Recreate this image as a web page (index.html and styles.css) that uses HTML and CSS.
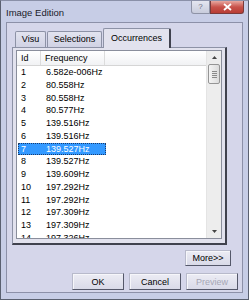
FILE: index.html
```html
<!DOCTYPE html>
<html lang="en">
<head>
    <meta charset="UTF-8">
    <title>Image Edition</title>
    <link rel="stylesheet" href="styles.css">
</head>
<body>
    <div class="ventana">
        <div class="titulo">
            <span class="titulo-texto">Image Edition</span>
            <div class="titulo-botones">
                <span class="btn-ayuda">?</span>
                <span class="btn-cerrar">
                    <svg width="9" height="8" viewBox="0 0 9 8"><path d="M1 1 L8 7 M8 1 L1 7" stroke="#fff" stroke-width="1.8"/></svg>
                </span>
            </div>
        </div>
        <div class="cliente">
            <div class="pestanas">
                <div class="pestana p-visu">Visu</div>
                <div class="pestana p-sel">Selections</div>
                <div class="pestana p-occ activa">Occurrences</div>
            </div>
            <div class="panel">
                <div class="lista">
                    <div class="lista-cuerpo">
                        <div class="cabecera">
                            <div class="col-id">Id</div>
                            <div class="col-freq">Frequency</div>
                            <div class="col-resto"></div>
                        </div>
                        <div class="fila"><div class="col-id">1</div><div class="col-freq">6.582e-006Hz</div></div>
                        <div class="fila"><div class="col-id">2</div><div class="col-freq">80.558Hz</div></div>
                        <div class="fila"><div class="col-id">3</div><div class="col-freq">80.558Hz</div></div>
                        <div class="fila"><div class="col-id">4</div><div class="col-freq">80.577Hz</div></div>
                        <div class="fila"><div class="col-id">5</div><div class="col-freq">139.516Hz</div></div>
                        <div class="fila"><div class="col-id">6</div><div class="col-freq">139.516Hz</div></div>
                        <div class="fila seleccionada"><div class="col-id">7</div><div class="col-freq">139.527Hz</div></div>
                        <div class="fila"><div class="col-id">8</div><div class="col-freq">139.527Hz</div></div>
                        <div class="fila"><div class="col-id">9</div><div class="col-freq">139.609Hz</div></div>
                        <div class="fila"><div class="col-id">10</div><div class="col-freq">197.292Hz</div></div>
                        <div class="fila"><div class="col-id">11</div><div class="col-freq">197.292Hz</div></div>
                        <div class="fila"><div class="col-id">12</div><div class="col-freq">197.309Hz</div></div>
                        <div class="fila"><div class="col-id">13</div><div class="col-freq">197.309Hz</div></div>
                        <div class="fila"><div class="col-id">14</div><div class="col-freq">197.326Hz</div></div>
                    </div>
                    <div class="scroll">
                        <div class="flecha">
                            <svg width="5" height="3" viewBox="0 0 5 3"><path d="M0 3 L2.5 0 L5 3 Z" fill="#444"/></svg>
                        </div>
                        <div class="pulgar"><span></span><span></span><span></span><span></span></div>
                        <div class="pista"></div>
                        <div class="flecha">
                            <svg width="5" height="3" viewBox="0 0 5 3"><path d="M0 0 L5 0 L2.5 3 Z" fill="#444"/></svg>
                        </div>
                    </div>
                </div>
            </div>
            <div class="fila-mas">
                <button class="boton boton-mas">More&gt;&gt;</button>
            </div>
            <div class="fila-botones">
                <button class="boton">OK</button>
                <button class="boton">Cancel</button>
                <button class="boton deshabilitado">Preview</button>
            </div>
        </div>
    </div>
</body>
</html>
```

FILE: styles.css
```css
body {
    margin: 0;
    padding: 0;
    font-family: "Liberation Sans", Arial, sans-serif;
    font-size: 9px;
    color: #000;
    background-color: #fff;
}

.ventana {
    width: 249px;
    height: 300px;
    box-sizing: border-box;
    border: 1px solid #5a6070;
    border-top-color: #8a90a8;
    background-color: #c7cde6;
    display: flex;
    flex-direction: column;
}

.titulo {
    height: 21px;
    flex-shrink: 0;
    display: flex;
    align-items: flex-start;
    justify-content: space-between;
    padding-left: 5px;
}

.titulo-texto {
    margin-top: 6px;
    font-size: 9.5px;
    color: #1a1a2a;
}

.titulo-botones {
    display: flex;
    margin-right: 4px;
}

.btn-ayuda {
    width: 19px;
    height: 13px;
    box-sizing: border-box;
    border: 1px solid #8e93a6;
    border-top: none;
    border-radius: 0 0 0 3px;
    background: linear-gradient(#e4e6f0, #c8ccdc);
    color: #6a6e80;
    font-size: 8px;
    text-align: center;
    line-height: 12px;
}

.btn-cerrar {
    width: 34px;
    height: 13px;
    box-sizing: border-box;
    border: 1px solid #7a3a3a;
    border-top: none;
    border-radius: 0 0 3px 0;
    background: linear-gradient(#e8a8a0, #c8524a 50%, #b83c34);
    display: flex;
    align-items: center;
    justify-content: center;
}

.cliente {
    flex: 1;
    margin: 0 5px 6px 5px;
    border: 1px solid #8c90a8;
    background-color: #d5d6ea;
    display: flex;
    flex-direction: column;
}

.pestanas {
    display: flex;
    align-items: flex-end;
    height: 24px;
    flex-shrink: 0;
    padding-left: 8px;
}

.pestana {
    height: 16px;
    box-sizing: border-box;
    text-align: center;
    line-height: 15px;
    border: 1px solid #8d92a6;
    border-bottom: none;
    border-radius: 2px 2px 0 0;
    background: linear-gradient(#e2e3ef, #d0d2e4);
    margin-right: 1px;
}

.p-visu {
    width: 31px;
}

.p-sel {
    width: 55px;
}

.p-occ {
    width: 68px;
}

.pestana.activa {
    height: 20px;
    line-height: 18px;
    background: #e2e2ee;
    border-right: 2px solid #40424e;
    margin-bottom: -1px;
    position: relative;
}

.panel {
    margin-left: 5px;
    width: 215px;
    height: 198px;
    flex-shrink: 0;
    box-sizing: border-box;
    border: 1px solid #8d92a6;
    border-right: 2px solid #40424e;
    border-bottom: 2px solid #40424e;
    background-color: #e2e2ee;
    padding: 2px 3px 4px 3px;
}

.lista {
    height: 100%;
    box-sizing: border-box;
    border: 1px solid #8a8e9c;
    background-color: #fff;
    display: flex;
    overflow: hidden;
}

.lista-cuerpo {
    flex: 1;
    overflow: hidden;
}

.cabecera {
    display: flex;
    height: 15px;
    box-sizing: border-box;
    background: linear-gradient(#ffffff, #f1f2f4);
    border-bottom: 1px solid #d5d5d5;
    line-height: 14px;
}

.cabecera .col-id,
.cabecera .col-freq {
    border-right: 1px solid #dcdcdc;
}

.col-id {
    width: 24px;
    box-sizing: border-box;
    padding-left: 4px;
}

.col-freq {
    width: 64px;
    box-sizing: border-box;
    padding-left: 4px;
}

.col-resto {
    flex: 1;
}

.fila {
    display: flex;
    height: 12.75px;
    line-height: 12.75px;
    margin-left: 1px;
}

.fila.seleccionada {
    width: 88px;
    background-color: #3399ff;
    color: #fff;
    outline: 1px dotted #1a3a6a;
    outline-offset: -1px;
}

.fila .col-id {
    padding-left: 3px;
}

.scroll {
    width: 14px;
    background-color: #ededed;
    border-left: 1px solid #e4e4e4;
    display: flex;
    flex-direction: column;
}

.flecha {
    height: 13px;
    display: flex;
    align-items: center;
    justify-content: center;
}

.pulgar {
    height: 18px;
    margin: 0 1px;
    border: 1px solid #959595;
    border-radius: 2px;
    background: linear-gradient(90deg, #f4f4f4, #dcdcdc);
    display: flex;
    flex-direction: column;
    align-items: center;
    justify-content: center;
    gap: 1px;
}

.pulgar span {
    width: 5px;
    height: 1px;
    background-color: #8a8a8a;
}

.pista {
    flex: 1;
}

.fila-mas {
    display: flex;
    justify-content: flex-end;
    padding: 5px 11px 0 0;
}

.fila-botones {
    display: flex;
    justify-content: flex-end;
    gap: 5px;
    padding: 7px 4px 0 0;
}

.boton {
    font-family: "Liberation Sans", Arial, sans-serif;
    font-size: 9px;
    color: #000;
    width: 52px;
    height: 17px;
    padding: 0;
    border: 1px solid #b8bacb;
    border-right-color: #55586a;
    border-bottom-color: #55586a;
    box-shadow: inset 1px 1px 0 #f6f6fa;
    background: linear-gradient(#ececf4, #d9dae8);
}

.boton-mas {
    width: 46px;
    height: 16px;
}

.deshabilitado {
    color: #a5a6b4;
}
```
